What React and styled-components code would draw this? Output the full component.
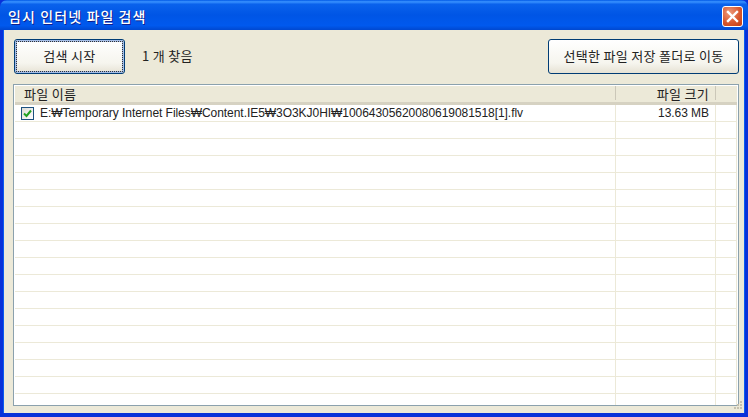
import React from 'react';
import styled, { createGlobalStyle } from 'styled-components';

const GlobalStyle = createGlobalStyle`
  html, body {
    margin: 0;
    padding: 0;
    background: #0831d9;
    overflow: hidden;
  }
`;

const Window = styled.div`
  position: relative;
  width: 748px;
  height: 417px;
  display: flex;
  flex-direction: column;
  box-sizing: border-box;
  font-family: "Liberation Sans", "Noto Sans CJK KR", sans-serif;
  font-size: 12px;
  color: #222;
  background: #0831d9;
`;

const TitleBar = styled.div`
  height: 30px;
  flex: none;
  display: flex;
  align-items: center;
  justify-content: space-between;
  box-sizing: border-box;
  padding: 2px 5px 0 8px;
  border-radius: 7px 7px 0 0;
  background: linear-gradient(180deg, #0058e6 0%, #3a93ff 6%, #0a62ec 14%, #0055e5 50%, #0059ee 85%, #0048d0 100%);
`;

const Title = styled.span`
  color: #fff;
  font-family: "Noto Sans CJK KR", sans-serif;
  font-size: 14px;
  font-weight: 500;
  letter-spacing: 1.1px;
  text-shadow: 1px 1px 0 #0f1e8c;
`;

const CloseButton = styled.div`
  width: 21px;
  height: 21px;
  box-sizing: border-box;
  border: 1px solid #fff;
  border-radius: 3px;
  display: flex;
  align-items: center;
  justify-content: center;
  background: radial-gradient(circle at 35% 30%, #ec9a7c 0%, #d9582f 55%, #c03c12 100%);
`;

const Frame = styled.div`
  flex: 1;
  min-height: 0;
  display: flex;
  flex-direction: column;
  margin: 0 4px 4px;
  padding: 9px 5px 7px 9px;
  background: #ece9d8;
  box-shadow: -1px 0 0 #0a5cf0, 1px 0 0 #0a5cf0;
`;

const Toolbar = styled.div`
  height: 35px;
  flex: none;
  display: flex;
  align-items: center;
  gap: 17px;
  margin-left: 1px;
  margin-bottom: 10px;
`;

const Button = styled.div`
  height: 35px;
  box-sizing: border-box;
  display: flex;
  align-items: center;
  justify-content: center;
  width: ${p => p.$width}px;
  border: 1px solid #003c74;
  border-radius: 3px;
  background: linear-gradient(180deg, #ffffff 0%, #f6f5ee 70%, #e6e2d4 100%);
  font-family: "Noto Sans CJK KR", sans-serif;
  font-size: 13px;
  letter-spacing: 0.3px;
  padding-bottom: 2px;
  ${p => p.$focused && `
    box-shadow: inset 0 0 0 2px #a5bde6;
    outline: 1px dotted #333;
    outline-offset: -3px;
  `}
`;

const Status = styled.span`
  flex: 1;
  font-family: "Noto Sans CJK KR", sans-serif;
  font-size: 13px;
  letter-spacing: 0.3px;
  padding-bottom: 3px;
`;

const List = styled.div`
  flex: 1;
  min-height: 0;
  overflow: hidden;
  background: #fff;
  border: 1px solid #8ba1ad;
  padding: 1px;
`;

const HeaderRow = styled.div`
  height: 19px;
  box-sizing: border-box;
  display: grid;
  grid-template-columns: 601px 100px 1fr;
  background: #ece9d8;
  border-bottom: 3px solid #d6d2c2;
  font-family: "Noto Sans CJK KR", sans-serif;
  font-size: 13px;
`;

const HeaderCell = styled.div`
  display: flex;
  align-items: center;
  box-sizing: border-box;
  height: 14px;
  padding: 0 ${p => (p.$right ? '6px' : '9px')};
  justify-content: ${p => (p.$right ? 'flex-end' : 'flex-start')};
  border-right: 1px solid #cbc7b8;
  letter-spacing: 0.3px;
`;

const Row = styled.div`
  height: 17px;
  box-sizing: border-box;
  display: grid;
  grid-template-columns: 601px 100px 1fr;
  border-bottom: 1px solid #ece9d8;
`;

const Cell = styled.div`
  display: flex;
  align-items: center;
  gap: 6px;
  box-sizing: border-box;
  height: 16px;
  padding: 0 6px;
  justify-content: ${p => (p.$right ? 'flex-end' : 'flex-start')};
  border-right: 1px solid #ece9d8;
  white-space: nowrap;
  letter-spacing: -0.05px;
`;

const CheckBox = styled.div`
  width: 13px;
  height: 13px;
  flex: none;
  box-sizing: border-box;
  border: 1px solid #1c5180;
  background: linear-gradient(135deg, #dcdcd7 0%, #ffffff 100%);
  display: flex;
  align-items: center;
  justify-content: center;
`;

const Grip = styled.svg`
  position: absolute;
  right: 5px;
  bottom: 5px;
`;

function App() {
  const emptyRows = Array.from({ length: 17 });
  return (
    <Window>
      <GlobalStyle />
      <TitleBar>
        <Title>임시 인터넷 파일 검색</Title>
        <CloseButton>
          <svg width="15" height="15" viewBox="0 0 15 15">
            <path d="M3 3 L12 12 M12 3 L3 12" stroke="#fff" strokeWidth="2.4" strokeLinecap="square" />
          </svg>
        </CloseButton>
      </TitleBar>
      <Frame>
        <Toolbar>
          <Button $width={111} $focused>검색 시작</Button>
          <Status>1 개 찾음</Status>
          <Button $width={191}>선택한 파일 저장 폴더로 이동</Button>
        </Toolbar>
        <List>
          <HeaderRow>
            <HeaderCell>파일 이름</HeaderCell>
            <HeaderCell $right>파일 크기</HeaderCell>
          </HeaderRow>
          <Row>
            <Cell>
              <CheckBox>
                <svg width="9" height="9" viewBox="0 0 9 9">
                  <path d="M1 4.5 L3.5 7 L8 1.5" fill="none" stroke="#21a121" strokeWidth="2" />
                </svg>
              </CheckBox>
              E:₩Temporary Internet Files₩Content.IE5₩3O3KJ0HI₩10064305620080619081518[1].flv
            </Cell>
            <Cell $right>13.63 MB</Cell>
            <Cell />
          </Row>
          {emptyRows.map((_, i) => (
            <Row key={i}>
              <Cell />
              <Cell />
              <Cell />
            </Row>
          ))}
        </List>
      </Frame>
      <Grip width="12" height="12" viewBox="0 0 12 12">
        <path d="M9 1h2v2H9z M6 4h2v2H6z M9 4h2v2H9z M3 7h2v2H3z M6 7h2v2H6z M9 7h2v2H9z" fill="#c4c0ae" />
      </Grip>
    </Window>
  );
}

export default App;
